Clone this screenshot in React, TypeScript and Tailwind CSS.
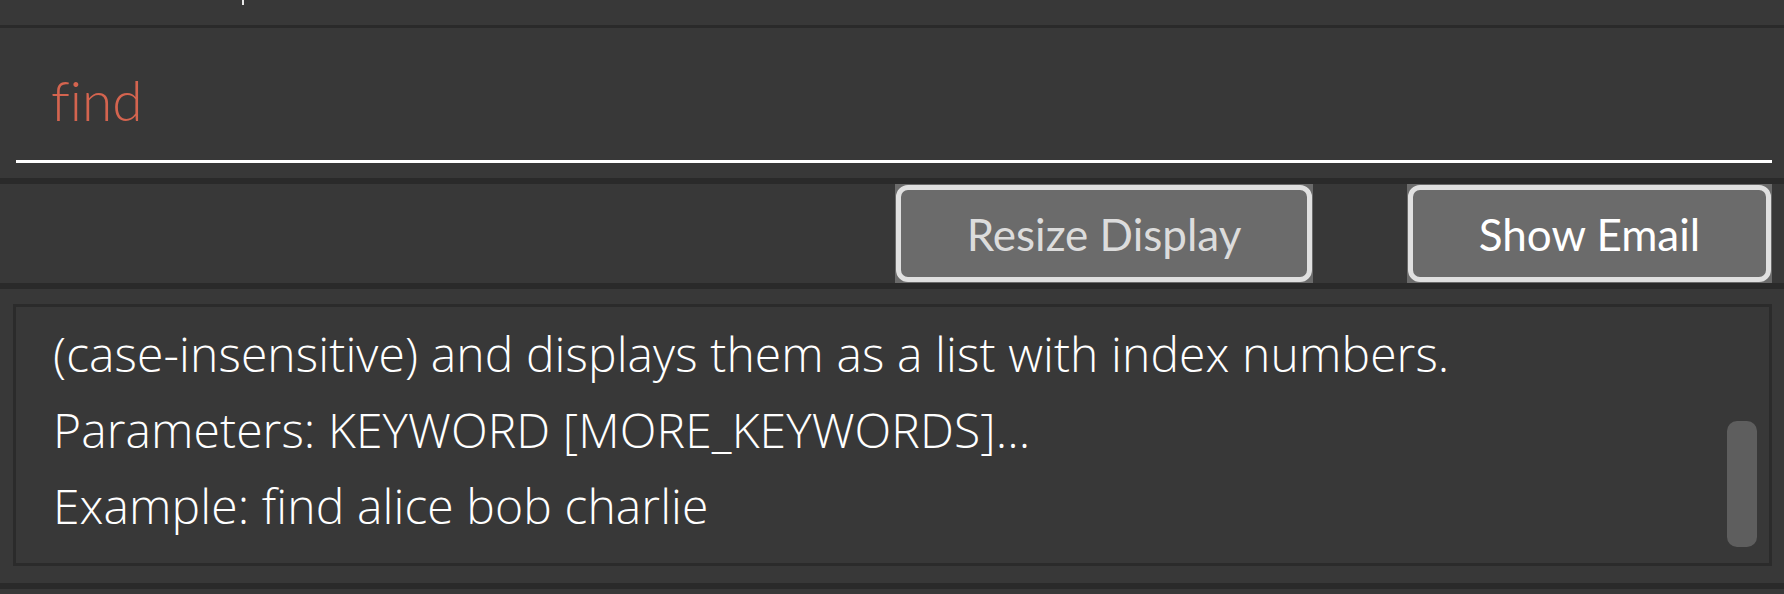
import React from "react";

const RESULT_LINES = [
  "(case-insensitive) and displays them as a list with index numbers.",
  "Parameters: KEYWORD [MORE_KEYWORDS]...",
  "Example: find alice bob charlie",
];

function ActionButton({ label, width, textClass }: { label: string; width: string; textClass: string }) {
  return (
    <div className={`${width} h-full bg-[#6b6b6b] p-[1px]`}>
      <button
        className={`w-full h-full rounded-[12px] border-[5px] border-[#e0e0e0] bg-[#6b6b6b] text-[44px] leading-none ${textClass}`}
      >
        {label}
      </button>
    </div>
  );
}

export default function App() {
  return (
    <div
      className="w-[1784px] h-[594px] bg-[#383838] flex flex-col overflow-hidden [font-variant-ligatures:none]"
      style={{ fontFamily: "Lato, 'Open Sans', 'Noto Sans', sans-serif" }}
    >
      {/* cut-off line above */}
      <div className="h-[25px] pl-[242px]">
        <div className="w-[2px] h-[5px] bg-[#e8e8e8]" />
      </div>
      <div className="h-[3px] bg-[#2a2a2a]" />

      {/* Command box */}
      <div className="h-[150px] pt-[45px]">
        <div className="pl-[51px] text-[55px] leading-[55px] font-light text-[#d4644f]">find</div>
        <div className="ml-[16px] mr-[12px] mt-[32px] h-[3px] bg-white" />
      </div>
      <div className="h-[6px] bg-[#2a2a2a]" />

      {/* Buttons */}
      <div className="h-[99px] flex justify-end gap-[94px] pr-[12px]">
        <ActionButton label="Resize Display" width="w-[418px]" textClass="text-[#dcdcdc]" />
        <ActionButton label="Show Email" width="w-[365px]" textClass="text-white" />
      </div>
      <div className="h-[6px] bg-[#2a2a2a]" />

      {/* Result display */}
      <div className="h-[294px] pt-[15px] pl-[13px] pr-[12px]">
        <div className="relative h-[262px] border-[3px] border-[#2b2b2b] overflow-hidden">
          <div
            className="pl-[37px] pt-[9px] text-[48px] leading-[76px] tracking-[0.1px] font-light text-white whitespace-nowrap"
            style={{ fontFamily: "'Open Sans', Lato, sans-serif" }}
          >
            {RESULT_LINES.map((line) => (
              <div key={line}>{line}</div>
            ))}
          </div>
          <div className="absolute left-[1711px] top-[114px] w-[30px] h-[126px] rounded-[10px] bg-[#5e5e5e]" />
        </div>
      </div>
      <div className="h-[6px] bg-[#2a2a2a]" />
      <div className="flex-1" />
    </div>
  );
}
